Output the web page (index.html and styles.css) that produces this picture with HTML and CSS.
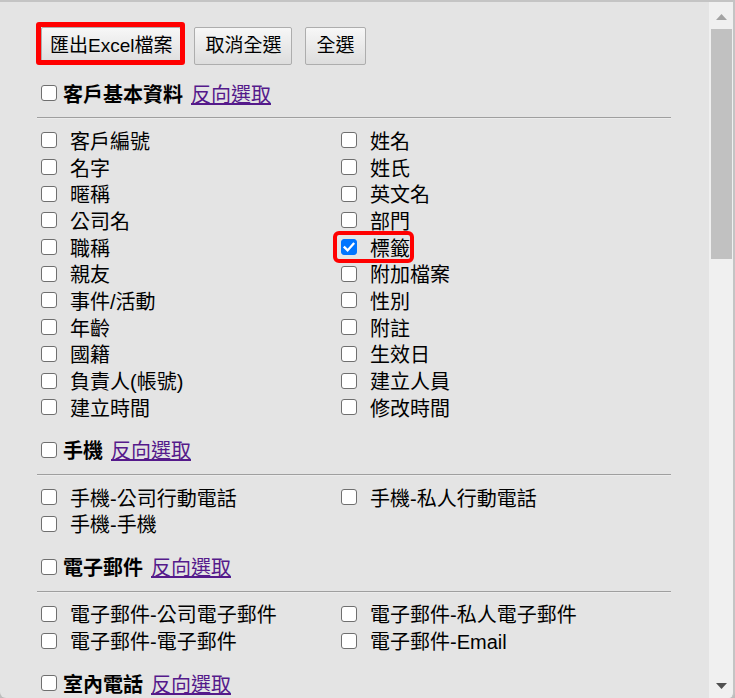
FILE: index.html
```html
<!DOCTYPE html>
<html lang="zh-Hant">
<head>
<meta charset="utf-8">
<title>匯出Excel檔案</title>
<link rel="stylesheet" href="styles.css">
</head>
<body>
<div class="frame">
  <div class="content">
    <div class="toolbar">
      <span class="mark"><button class="btn btn-export" type="button">匯出Excel檔案</button></span>
      <button class="btn" type="button">取消全選</button>
      <button class="btn" type="button">全選</button>
    </div>

    <div class="section">
      <div class="section-head">
        <span class="box" role="checkbox" aria-checked="false"></span>
        <span class="head-title">客戶基本資料</span>
        <a href="#" class="invert">反向選取</a>
      </div>
      <hr class="rule">
      <div class="items">
        <label class="item"><span class="box"></span><span>客戶編號</span></label>
        <label class="item"><span class="box"></span><span>姓名</span></label>
        <label class="item"><span class="box"></span><span>名字</span></label>
        <label class="item"><span class="box"></span><span>姓氏</span></label>
        <label class="item"><span class="box"></span><span>暱稱</span></label>
        <label class="item"><span class="box"></span><span>英文名</span></label>
        <label class="item"><span class="box"></span><span>公司名</span></label>
        <label class="item"><span class="box"></span><span>部門</span></label>
        <label class="item"><span class="box"></span><span>職稱</span></label>
        <label class="item item-hl"><span class="box box-on"><svg width="16" height="16" viewBox="0 0 16 16"><polyline points="3.6,8.4 6.6,11.4 12.4,4.8" fill="none" stroke="#fff" stroke-width="2.3" stroke-linecap="square"/></svg></span><span>標籤</span></label>
        <label class="item"><span class="box"></span><span>親友</span></label>
        <label class="item"><span class="box"></span><span>附加檔案</span></label>
        <label class="item"><span class="box"></span><span>事件/活動</span></label>
        <label class="item"><span class="box"></span><span>性別</span></label>
        <label class="item"><span class="box"></span><span>年齡</span></label>
        <label class="item"><span class="box"></span><span>附註</span></label>
        <label class="item"><span class="box"></span><span>國籍</span></label>
        <label class="item"><span class="box"></span><span>生效日</span></label>
        <label class="item"><span class="box"></span><span>負責人(帳號)</span></label>
        <label class="item"><span class="box"></span><span>建立人員</span></label>
        <label class="item"><span class="box"></span><span>建立時間</span></label>
        <label class="item"><span class="box"></span><span>修改時間</span></label>
      </div>
    </div>

    <div class="section">
      <div class="section-head">
        <span class="box"></span>
        <span class="head-title">手機</span>
        <a href="#" class="invert">反向選取</a>
      </div>
      <hr class="rule">
      <div class="items">
        <label class="item"><span class="box"></span><span>手機-公司行動電話</span></label>
        <label class="item"><span class="box"></span><span>手機-私人行動電話</span></label>
        <label class="item"><span class="box"></span><span>手機-手機</span></label>
      </div>
    </div>

    <div class="section">
      <div class="section-head">
        <span class="box"></span>
        <span class="head-title">電子郵件</span>
        <a href="#" class="invert">反向選取</a>
      </div>
      <hr class="rule">
      <div class="items">
        <label class="item"><span class="box"></span><span>電子郵件-公司電子郵件</span></label>
        <label class="item"><span class="box"></span><span>電子郵件-私人電子郵件</span></label>
        <label class="item"><span class="box"></span><span>電子郵件-電子郵件</span></label>
        <label class="item"><span class="box"></span><span>電子郵件-Email</span></label>
      </div>
    </div>

    <div class="section">
      <div class="section-head">
        <span class="box"></span>
        <span class="head-title">室內電話</span>
        <a href="#" class="invert">反向選取</a>
      </div>
      <hr class="rule">
      <div class="items">
        <label class="item"><span class="box"></span><span>室內電話-公司電話</span></label>
        <label class="item"><span class="box"></span><span>室內電話-住家電話</span></label>
      </div>
    </div>
  </div>

  <div class="scrollbar">
    <div class="sb-btn sb-up">
      <svg width="11" height="6" viewBox="0 0 11 6"><polygon points="0,6 5.5,0 11,6" fill="#a3a3a3"/></svg>
    </div>
    <div class="sb-track"><div class="sb-thumb"></div></div>
    <div class="sb-btn sb-down">
      <svg width="11" height="6" viewBox="0 0 11 6"><polygon points="0,0 11,0 5.5,6" fill="#505050"/></svg>
    </div>
  </div>
</div>
</body>
</html>
```

FILE: styles.css
```css
html, body {
  margin: 0;
  padding: 0;
}

body {
  background: #bdbdbd;
  width: 735px;
  height: 698px;
  overflow: hidden;
  font-family: "Liberation Sans", "Noto Sans CJK TC", sans-serif;
  font-size: 20px;
  color: #000;
}

.frame {
  display: flex;
  height: 696px;
  border-top: 2px solid #c4c4c4;
  border-right: 2px solid #c4c4c4;
  border-radius: 0 0 6px 6px;
  background: #e4e4e4;
  overflow: hidden;
}

.content {
  flex: 1;
  overflow: hidden;
  padding: 25px 0 0 37px;
}

.toolbar {
  display: flex;
  align-items: flex-start;
  gap: 13px;
  padding-left: 4px;
  margin-bottom: 14px;
}

.btn {
  height: 38px;
  padding: 0 10px;
  border: 1px solid #adadad;
  border-radius: 2px;
  background: linear-gradient(#f7f7f7, #dddddd);
  font-family: "Liberation Sans", "Noto Sans CJK TC", sans-serif;
  font-size: 19px;
  color: #000;
  line-height: 36px;
  white-space: nowrap;
}

.btn-export {
  padding: 0 8px;
}

.mark {
  position: relative;
  display: inline-flex;
}

.mark::after {
  content: "";
  position: absolute;
  left: -5px;
  right: -4px;
  top: -5px;
  bottom: 0;
  border: 5px solid #ff0000;
  border-radius: 3px;
}

.section-head {
  display: flex;
  align-items: center;
  height: 28px;
  padding-left: 4px;
  white-space: nowrap;
}

.box {
  display: block;
  box-sizing: border-box;
  width: 16px;
  height: 16px;
  flex: none;
  border: 1px solid #6f6f6f;
  border-radius: 3px;
  background: #fff;
}

.box svg {
  display: block;
  margin: -1px;
}

.box-on {
  border-color: #0075ff;
  background: #0075ff;
}

.section-head .box {
  margin-right: 6px;
}

.head-title {
  font-weight: bold;
}

.invert {
  margin-left: 8px;
  color: #551a8b;
  text-decoration: underline;
}

.rule {
  width: 634px;
  height: 0;
  margin: 10px 0 8px 0;
  border: 0;
  border-top: 1px solid #9f9f9f;
  border-bottom: 1px solid #ececec;
}

.items {
  display: grid;
  grid-template-columns: 300px 300px;
  grid-auto-rows: 26.7px;
  margin-bottom: 15.3px;
}

.item {
  display: flex;
  align-items: center;
  align-self: center;
  gap: 13px;
  width: fit-content;
  height: 24px;
  padding-left: 4px;
  white-space: nowrap;
}

.item-hl {
  outline: 4px solid #ff0000;
  border-radius: 2px;
}

.scrollbar {
  width: 24px;
  flex: none;
  display: flex;
  flex-direction: column;
  background: #f0f0f0;
}

.sb-btn {
  display: flex;
  align-items: center;
  justify-content: center;
}

.sb-up {
  height: 27px;
  padding-top: 2px;
  box-sizing: border-box;
}

.sb-down {
  height: 24px;
  padding-bottom: 1px;
  box-sizing: border-box;
}

.sb-track {
  flex: 1;
}

.sb-thumb {
  height: 230px;
  margin: 0 1px 0 2px;
  background: #c1c1c1;
}
```
